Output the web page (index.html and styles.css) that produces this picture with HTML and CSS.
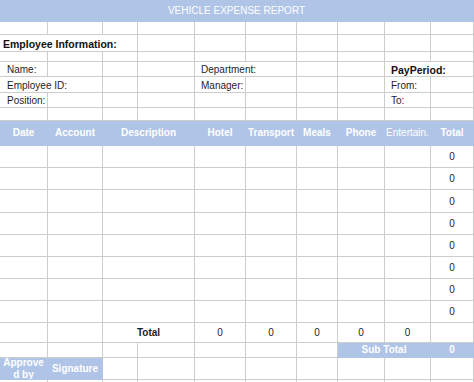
FILE: index.html
```html
<!DOCTYPE html>
<html>
<head>
<meta charset="utf-8">
<link rel="stylesheet" href="styles.css">
</head>
<body>
<div class="sheet">
  <!-- title -->
  <div class="c band title span10">VEHICLE EXPENSE REPORT</div>

  <!-- blank row -->
  <div class="c"></div><div class="c"></div><div class="c"></div><div class="c"></div><div class="c"></div>
  <div class="c"></div><div class="c"></div><div class="c"></div><div class="c"></div><div class="c"></div>

  <!-- employee information -->
  <div class="c span3 lbl first bold big">Employee Information:</div>
  <div class="c"></div><div class="c"></div><div class="c"></div><div class="c"></div>
  <div class="c"></div><div class="c"></div><div class="c"></div>

  <!-- blank short row -->
  <div class="c"></div><div class="c"></div><div class="c"></div><div class="c"></div><div class="c"></div>
  <div class="c"></div><div class="c"></div><div class="c"></div><div class="c"></div><div class="c"></div>

  <!-- name row -->
  <div class="c lbl">Name:</div>
  <div class="c"></div><div class="c"></div><div class="c"></div>
  <div class="c span2 lbl mid">Department:</div>
  <div class="c"></div><div class="c"></div>
  <div class="c span2 lbl mid bold big">PayPeriod:</div>

  <!-- employee id row -->
  <div class="c span2 lbl">Employee ID:</div>
  <div class="c"></div><div class="c"></div>
  <div class="c lbl mid">Manager:</div>
  <div class="c"></div><div class="c"></div><div class="c"></div>
  <div class="c lbl mid">From:</div>
  <div class="c"></div>

  <!-- position row -->
  <div class="c lbl">Position:</div>
  <div class="c"></div><div class="c"></div><div class="c"></div><div class="c"></div>
  <div class="c"></div><div class="c"></div><div class="c"></div>
  <div class="c lbl mid">To:</div>
  <div class="c"></div>

  <!-- blank row -->
  <div class="c"></div><div class="c"></div><div class="c"></div><div class="c"></div><div class="c"></div>
  <div class="c"></div><div class="c"></div><div class="c"></div><div class="c"></div><div class="c"></div>

  <!-- header -->
  <div class="c band hd">Date</div>
  <div class="c band hd">Account</div>
  <div class="c band hd span2">Description</div>
  <div class="c band hd">Hotel</div>
  <div class="c band hd">Transport</div>
  <div class="c band hd">Meals</div>
  <div class="c band hd">Phone</div>
  <div class="c band hd thin">Entertain.</div>
  <div class="c band hd">Total</div>

  <!-- data rows -->
  <div class="c"></div><div class="c"></div><div class="c span2"></div><div class="c"></div><div class="c"></div><div class="c"></div><div class="c"></div><div class="c"></div><div class="c num">0</div>
  <div class="c"></div><div class="c"></div><div class="c span2"></div><div class="c"></div><div class="c"></div><div class="c"></div><div class="c"></div><div class="c"></div><div class="c num">0</div>
  <div class="c"></div><div class="c"></div><div class="c span2"></div><div class="c"></div><div class="c"></div><div class="c"></div><div class="c"></div><div class="c"></div><div class="c num">0</div>
  <div class="c"></div><div class="c"></div><div class="c span2"></div><div class="c"></div><div class="c"></div><div class="c"></div><div class="c"></div><div class="c"></div><div class="c num">0</div>
  <div class="c"></div><div class="c"></div><div class="c span2"></div><div class="c"></div><div class="c"></div><div class="c"></div><div class="c"></div><div class="c"></div><div class="c num">0</div>
  <div class="c"></div><div class="c"></div><div class="c span2"></div><div class="c"></div><div class="c"></div><div class="c"></div><div class="c"></div><div class="c"></div><div class="c num">0</div>
  <div class="c"></div><div class="c"></div><div class="c span2"></div><div class="c"></div><div class="c"></div><div class="c"></div><div class="c"></div><div class="c"></div><div class="c num">0</div>
  <div class="c"></div><div class="c"></div><div class="c span2"></div><div class="c"></div><div class="c"></div><div class="c"></div><div class="c"></div><div class="c"></div><div class="c num">0</div>

  <!-- total row -->
  <div class="c"></div><div class="c"></div>
  <div class="c span2 num bold">Total</div>
  <div class="c num">0</div><div class="c num">0</div><div class="c num">0</div><div class="c num">0</div><div class="c num">0</div>
  <div class="c"></div>

  <!-- sub total row -->
  <div class="c"></div><div class="c"></div><div class="c"></div><div class="c"></div><div class="c"></div><div class="c"></div><div class="c"></div>
  <div class="c band hd span2">Sub Total</div>
  <div class="c band hd">0</div>

  <!-- approved row -->
  <div class="c band hd wrap">Approved by</div>
  <div class="c band hd">Signature</div>
  <div class="c"></div><div class="c"></div><div class="c"></div><div class="c"></div>
  <div class="c"></div><div class="c"></div><div class="c"></div><div class="c"></div>

  <!-- trailing row -->
  <div class="c"></div><div class="c"></div><div class="c"></div><div class="c"></div><div class="c"></div>
  <div class="c"></div><div class="c"></div><div class="c"></div><div class="c"></div><div class="c"></div>
</div>
</body>
</html>
```

FILE: styles.css
```css
html, body {
  margin: 0;
  padding: 0;
  background: #ffffff;
}

body {
  width: 474px;
  height: 382px;
  overflow: hidden;
  font-family: "Liberation Sans", Arial, sans-serif;
  font-size: 10px;
  color: #1e1e1e;
}

.sheet {
  display: grid;
  grid-template-columns: 48px 55px 35px 57px 51px 51px 41px 47px 46px 43px;
  grid-template-rows:
    22px 13px 17px 10px 15px 16px 15px 13px 25px
    22px 22px 23px 22px 22px 22px 22px 22px
    20px 15px 22px 12px;
  width: 474px;
}

.c {
  box-sizing: border-box;
  border-right: 1px solid #cdcdcd;
  border-bottom: 1px solid #cdcdcd;
  display: flex;
  align-items: center;
  overflow: hidden;
  white-space: nowrap;
  line-height: 12px;
}

.span2 { grid-column: span 2; }
.span3 { grid-column: span 3; }
.span10 { grid-column: span 10; }

.band {
  background: #b0c4e8;
  border-color: #b0c4e8;
  color: #ffffff;
}

.title {
  justify-content: center;
  font-size: 10px;
  padding-top: 1px;
}

.hd {
  justify-content: center;
  font-weight: bold;
}

.hd.thin {
  font-weight: normal;
}

.wrap {
  white-space: normal;
  word-break: break-all;
  text-align: center;
  padding: 0 1px;
}

.lbl {
  padding-left: 7px;
  padding-top: 2px;
}

.lbl.first {
  padding-left: 3px;
  padding-top: 1px;
}

.lbl.mid {
  padding-left: 6px;
}

.bold {
  font-weight: bold;
}

.big {
  font-size: 10.5px;
  color: #111111;
}

.num {
  justify-content: center;
  padding-top: 1px;
}
```
